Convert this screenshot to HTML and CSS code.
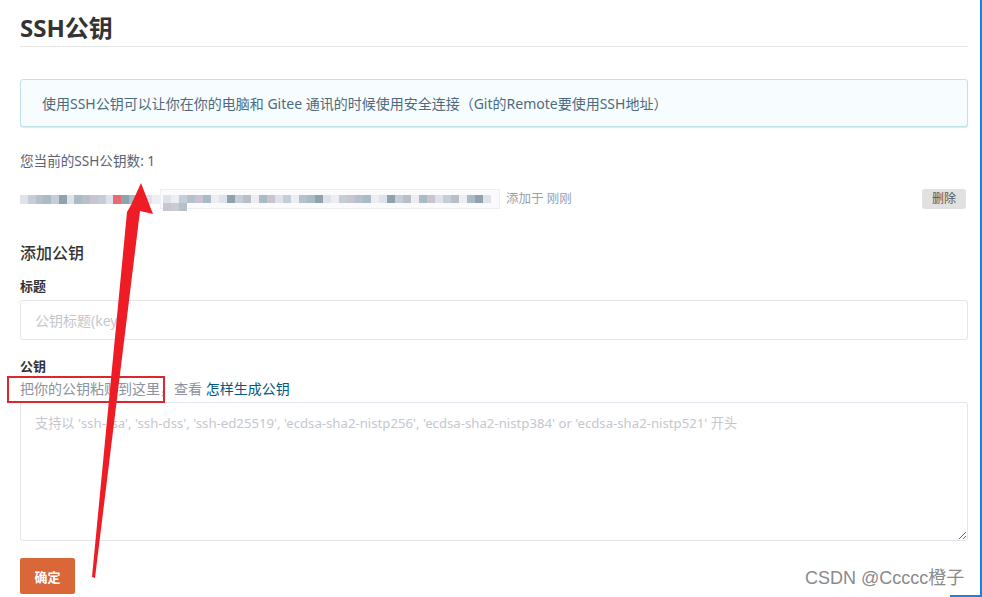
FILE: index.html
```html
<!DOCTYPE html>
<html lang="zh-CN">
<head>
<meta charset="utf-8">
<title>SSH公钥</title>
<link rel="stylesheet" href="styles.css">
</head>
<body>
<div class="page">
  <h1 class="title">SSH公钥</h1>
  <div class="alert">使用SSH公钥可以让你在你的电脑和 Gitee 通讯的时候使用安全连接（Git的Remote要使用SSH地址）</div>
  <div class="count">您当前的SSH公钥数: 1</div>
  <div class="key-row">
    <div class="key-blur">
      <div class="seg1">
        <i class="b3"></i><i class="b1"></i><i class="b4"></i><i class="b2"></i><i class="b1"></i><i class="b5"></i><i class="b3"></i><i class="b2"></i><i class="b4"></i><i class="b6"></i><i class="b1"></i><i class="b3"></i><i class="b8"></i><i class="b5"></i><i class="b2"></i><i class="b4"></i><i class="b3"></i><i class="b7"></i>
      </div>
      <div class="seg2">
        <i class="b3"></i><i class="b7"></i><i class="b1"></i><i class="b4"></i><i class="b6"></i><i class="b2"></i><i class="b7"></i><i class="b3"></i><i class="b5"></i><i class="b1"></i><i class="b4"></i><i class="b7"></i><i class="b2"></i><i class="b6"></i><i class="b3"></i><i class="b1"></i><i class="b7"></i><i class="b4"></i><i class="b2"></i><i class="b5"></i><i class="b3"></i><i class="b7"></i><i class="b1"></i><i class="b6"></i><i class="b4"></i><i class="b2"></i><i class="b7"></i><i class="b3"></i><i class="b5"></i><i class="b1"></i><i class="b4"></i><i class="b7"></i><i class="b2"></i><i class="b6"></i><i class="b3"></i><i class="b1"></i><i class="b4"></i><i class="b7"></i><i class="b2"></i><i class="b5"></i><i class="b3"></i><i class="b6"></i><i class="b1"></i><i class="b4"></i>
      </div>
    </div>
    <span class="added">添加于 刚刚</span>
    <button class="del">删除</button>
  </div>
  <h3 class="sub">添加公钥</h3>
  <label class="lbl">标题</label>
  <input class="inp" type="text" placeholder="公钥标题(key)">
  <label class="lbl lbl2">公钥</label>
  <div class="help"><span class="boxed">把你的公钥粘贴到这里</span>，查看 <a class="link" href="#">怎样生成公钥</a></div>
  <textarea class="ta" placeholder="支持以 'ssh-rsa', 'ssh-dss', 'ssh-ed25519', 'ecdsa-sha2-nistp256', 'ecdsa-sha2-nistp384' or 'ecdsa-sha2-nistp521' 开头"></textarea>
  <button class="ok">确定</button>

  <div class="wm">CSDN @Ccccc橙子</div>
  <svg class="arrow" width="982" height="597" viewBox="0 0 982 597" xmlns="http://www.w3.org/2000/svg">
    <polygon points="141,183 153,214 140,211 95,578 92,577 127,212 131,205" fill="#ee1c25"/>
  </svg>
  <div class="frame-r"></div>
  <div class="frame-b"></div>
</div>
</body>
</html>
```
FILE: styles.css
```css
* { box-sizing: border-box; }
html, body { margin: 0; padding: 0; background: #fff; }
body {
  font-family: "Noto Sans", "Noto Sans CJK SC", sans-serif;
  color: #40485b;
  font-size: 13px;
}
.page {
  position: relative;
  width: 982px;
  height: 597px;
  overflow: hidden;
  padding: 0 14px 0 20px;
  display: flex;
  flex-direction: column;
  align-items: flex-start;
}
.title {
  margin: 0;
  padding: 13px 0 3px;
  width: 948px;
  font-size: 24px;
  line-height: 30px;
  font-weight: 700;
  color: #333;
  border-bottom: 1px solid #e6e6e6;
}
.alert {
  margin-top: 32px;
  width: 948px;
  height: 48px;
  padding: 0 21px;
  display: flex;
  align-items: center;
  background: #f7fdfe;
  border: 1px solid #bfe1e8;
  border-radius: 3px;
  box-shadow: 0 1px 1px rgba(150,190,200,.35);
  color: #4c6a80;
  font-size: 14px;
}
.count {
  margin-top: 24px;
  line-height: 20px;
  font-size: 13.6px;
  color: #5b6270;
}
.key-row {
  margin-top: 18px;
  width: 946px;
  height: 20px;
  display: flex;
  align-items: center;
}
.key-blur {
  display: flex;
  align-items: center;
  width: 480px;
  height: 20px;
  filter: blur(0.6px);
}
.seg1 { display: flex; width: 140px; height: 9px; }
.seg2 {
  display: flex;
  flex-wrap: wrap;
  width: 340px;
  height: 20px;
  padding: 5px 2px;
  background: #fbfbfd;
  border: 1px solid #eceef2;
}
.seg1 i { flex: 1; height: 9px; }
.seg2 i { width: 8px; height: 8px; }
.b1 { background: #c5ced6; }
.b2 { background: #a9bbc5; }
.b3 { background: #dde3e8; }
.b4 { background: #b6c0c9; }
.b5 { background: #8fa3ad; }
.b6 { background: #c9c4d0; }
.b7 { background: #eceef1; }
.b8 { background: #e86a6e; }
.added {
  margin-left: 6px;
  color: #9a9fa8;
  font-size: 12.5px;
  line-height: 20px;
}
.del {
  margin-left: auto;
  height: 20px;
  padding: 0 10px;
  border: 0;
  border-radius: 3px;
  background: #e1e1e1;
  color: #555;
  font-family: inherit;
  font-size: 12px;
  line-height: 20px;
}
.sub {
  margin: 32px 0 0;
  font-size: 16px;
  line-height: 24px;
  font-weight: 500;
  color: #333;
}
.lbl {
  margin-top: 11px;
  font-size: 13px;
  line-height: 20px;
  font-weight: 700;
  color: #333;
}
.lbl2 { margin-top: 16px; }
.inp {
  margin-top: 4px;
  width: 948px;
  height: 40px;
  padding: 0 14px;
  border: 1px solid #e3e4ec;
  border-radius: 3px;
  font-family: inherit;
  font-size: 14px;
  color: #333;
  outline: none;
}
.inp::placeholder, .ta::placeholder { color: #c4c7ce; }
.help {
  margin-top: 3px;
  font-size: 14px;
  line-height: 20px;
  color: #8c92a0;
}
.boxed {
  position: relative;
  display: inline-block;
}
.boxed::after {
  content: "";
  position: absolute;
  left: -13px;
  right: -5px;
  top: -3px;
  bottom: -4px;
  border: 2px solid #d9282f;
}
.link { color: #005980; text-decoration: none; }
.ta {
  margin-top: 3px;
  width: 948px;
  height: 139px;
  padding: 10px 14px;
  border: 1px solid #e3e4ec;
  border-radius: 3px;
  font-family: inherit;
  font-size: 13.2px;
  line-height: 20px;
  resize: vertical;
  outline: none;
}
.ok {
  margin-top: 17px;
  width: 55px;
  height: 36px;
  border: 0;
  border-radius: 2px;
  background: #da6738;
  color: #fff;
  font-family: inherit;
  font-size: 13px;
  font-weight: 700;
}
.wm {
  position: absolute;
  left: 805px;
  top: 566px;
  font-family: "Liberation Sans", "Noto Sans CJK SC", sans-serif;
  font-size: 18px;
  line-height: 24px;
  color: #8a8a8a;
  text-shadow: 0 0 2px #fff;
}
.arrow {
  position: absolute;
  left: 0;
  top: 0;
  pointer-events: none;
}
.frame-r {
  position: absolute;
  left: 980px;
  top: 0;
  width: 2px;
  height: 597px;
  background: #1c80e0;
}
.frame-b {
  position: absolute;
  left: 950px;
  top: 595px;
  width: 32px;
  height: 2px;
  background: #1c80e0;
}
```
